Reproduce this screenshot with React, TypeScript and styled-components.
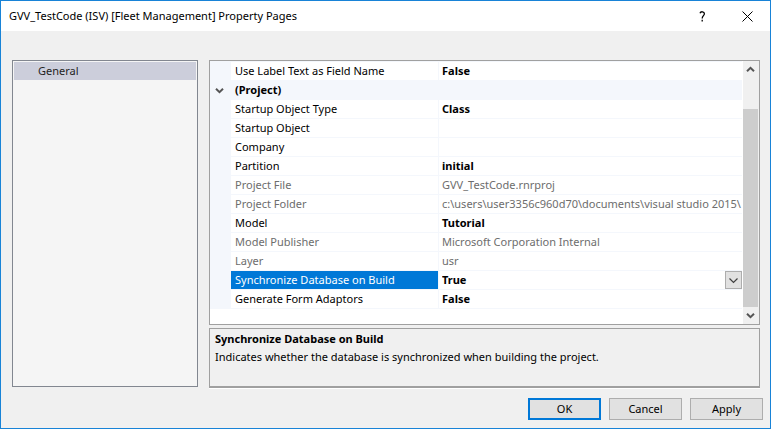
import React from "react";
import styled, { createGlobalStyle, css } from "styled-components";

const GlobalStyle = createGlobalStyle`
  *, *::before, *::after { box-sizing: border-box; }
  body {
    margin: 0;
    background: #f0f0f0;
    color: #000;
    font: 11px/18px "Noto Sans", "Open Sans", sans-serif;
  }
  button, select { font: inherit; color: inherit; }
`;

const Dialog = styled.main`
  display: flex;
  flex-direction: column;
  min-height: 100vh;
  border: 1px solid #1883d7;
  background: #f0f0f0;
`;

const TitleBar = styled.header`
  display: flex;
  align-items: center;
  height: 30px;
  padding: 0 0 0 8px;
  background: #fff;
`;

const Title = styled.h1`
  flex: 1;
  margin: 0;
  font-size: 11px;
  font-weight: 400;
  white-space: nowrap;
`;

const CaptionButton = styled.button`
  display: grid;
  place-items: center;
  width: 45px;
  height: 28px;
  padding: 0;
  border: 0;
  background: transparent;
`;

const Content = styled.div`
  display: flex;
  flex: 1;
  gap: 11px;
  padding: 29px 10px 0 11px;
`;

const PageList = styled.nav`
  flex: none;
  width: 186px;
  margin-bottom: 2px;
  padding: 1px;
  border: 1px solid #828790;
  background: #f5f5f5;
`;

const PageLink = styled.a`
  display: block;
  padding-left: 24px;
  background: #cccedb;
  color: #1e1e1e;
  text-decoration: none;
`;

const Properties = styled.section`
  display: flex;
  flex: 1;
  flex-direction: column;
  gap: 3px;
  min-width: 0;
`;

const GridBox = styled.div`
  display: flex;
  flex: 1;
  border: 1px solid #a0a0a0;
  background: #fff;
`;

const GridView = styled.div`
  flex: 1;
  min-width: 0;
  padding-bottom: 14px;
  border-top: 1px solid #f4f7fc;
`;

const PropertyTable = styled.table`
  width: 100%;
  table-layout: fixed;
  border-collapse: separate;
  border-spacing: 0;
`;

const GutterCol = styled.col`
  width: 21px;
`;

const NameCol = styled.col`
  width: 208px;
`;

const Gutter = styled.td`
  padding: 0;
  background: #f4f7fc;
`;

const Toggle = styled.button`
  display: grid;
  place-items: center;
  width: 19px;
  height: 18px;
  padding: 0;
  border: 0;
  background: transparent;
`;

const cell = css`
  height: 19px;
  padding: 0 0 0 4px;
  border-bottom: 1px solid #f4f7fc;
  background-clip: padding-box;
  overflow: hidden;
  text-align: left;
  white-space: nowrap;
`;

const CategoryCell = styled.th`
  ${cell}
  background-color: #f4f7fc;
`;

const NameCell = styled.th<{ $selected?: boolean; $readOnly?: boolean }>`
  ${cell}
  border-right: 1px solid #f4f7fc;
  font-weight: 400;
  background-color: ${(p) => (p.$selected ? "#0078d7" : "#fff")};
  color: ${(p) => (p.$selected ? "#fff" : p.$readOnly ? "#6d6d6d" : "#000")};
`;

const ValueCell = styled.td<{ $readOnly?: boolean }>`
  ${cell}
  padding-left: 3px;
  font-weight: ${(p) => (p.$readOnly ? 400 : 700)};
  color: ${(p) => (p.$readOnly ? "#6d6d6d" : "#000")};
`;

const DropDown = styled.div`
  display: grid;
  grid-template-columns: 1fr 17px;
  height: 18px;
`;

const ValueSelect = styled.select`
  grid-area: 1 / 1 / 2 / 3;
  appearance: none;
  height: 18px;
  padding: 0;
  border: 0;
  outline: 0;
  background: transparent;
  line-height: 18px;
`;

const DropArrow = styled.span`
  grid-area: 1 / 2 / 2 / 3;
  display: grid;
  place-items: center;
  border: 1px solid #adadad;
  background: #e1e1e1;
  pointer-events: none;
`;

const ScrollBar = styled.div`
  display: flex;
  flex-direction: column;
  width: 16px;
  padding-right: 1px;
  margin-left: 1px;
  background: #f0f0f0;
`;

const ScrollButton = styled.button`
  display: grid;
  place-items: center;
  flex: none;
  height: 17px;
  padding: 0;
  border: 0;
  background: transparent;
`;

const ScrollTrack = styled.div`
  display: grid;
  flex: 1;
  grid-template-rows: 31fr 198fr;
`;

const ScrollThumb = styled.div`
  grid-row: 2;
  background: #cdcdcd;
`;

const Description = styled.div`
  min-height: 60px;
  margin-bottom: 1px;
  padding: 1px 5px;
  border: 1px solid #a0a0a0;
  border-bottom-width: 2px;
  box-shadow: 0 1px 0 #fff;
`;

const DescriptionTitle = styled.h2`
  margin: 0;
  font-size: 11px;
  font-weight: 700;
`;

const DescriptionText = styled.p`
  margin: 0;
`;

const Footer = styled.footer`
  display: flex;
  justify-content: flex-end;
  gap: 8px;
  padding: 9px 7px 8px;
`;

const PushButton = styled.button<{ $primary?: boolean }>`
  width: 73px;
  height: 22px;
  padding: 0;
  border: ${(p) => (p.$primary ? "2px solid #0078d7" : "1px solid #adadad")};
  background: #e1e1e1;
  line-height: 18px;
`;

function Chevron({ up, heavy }: { up?: boolean; heavy?: boolean }) {
  return (
    <svg width="9" height="7" viewBox="0 0 9 7" fill="none" stroke={heavy ? "#555" : "#404040"} strokeWidth={heavy ? 2 : 1.2}>
      <path d={up ? "M1 5.2 4.5 1.8 8 5.2" : heavy ? "M1 1.8 4.5 5.2 8 1.8" : "M.5 1.5 4.5 5.5 8.5 1.5"} />
    </svg>
  );
}

type Row = { name: string; value?: string; readOnly?: boolean; category?: boolean; options?: string[] };

const rows: Row[] = [
  { name: "Use Label Text as Field Name", value: "False" },
  { name: "(Project)", category: true },
  { name: "Startup Object Type", value: "Class" },
  { name: "Startup Object", value: "" },
  { name: "Company", value: "" },
  { name: "Partition", value: "initial" },
  { name: "Project File", value: "GVV_TestCode.rnrproj", readOnly: true },
  { name: "Project Folder", value: "c:\\users\\user3356c960d70\\documents\\visual studio 2015\\", readOnly: true },
  { name: "Model", value: "Tutorial" },
  { name: "Model Publisher", value: "Microsoft Corporation Internal", readOnly: true },
  { name: "Layer", value: "usr", readOnly: true },
  { name: "Synchronize Database on Build", value: "True", options: ["True", "False"] },
  { name: "Generate Form Adaptors", value: "False" },
];

function PropertyRow({ row }: { row: Row }) {
  if (row.category) {
    return (
      <tr>
        <Gutter>
          <Toggle aria-label="Collapse category" aria-expanded="true">
            <Chevron heavy />
          </Toggle>
        </Gutter>
        <CategoryCell colSpan={2}>{row.name}</CategoryCell>
      </tr>
    );
  }
  return (
    <tr>
      <Gutter />
      <NameCell
        scope="row"
        id={row.options ? "selected-property" : undefined}
        $selected={!!row.options}
        $readOnly={row.readOnly}
      >
        {row.name}
      </NameCell>
      <ValueCell $readOnly={row.readOnly}>
        {row.options ? (
          <DropDown>
            <ValueSelect aria-labelledby="selected-property" defaultValue={row.value}>
              {row.options.map((o) => (
                <option key={o}>{o}</option>
              ))}
            </ValueSelect>
            <DropArrow>
              <Chevron />
            </DropArrow>
          </DropDown>
        ) : (
          row.value
        )}
      </ValueCell>
    </tr>
  );
}

export default function App() {
  return (
    <>
      <GlobalStyle />
      <Dialog>
        <TitleBar>
          <Title>GVV_TestCode (ISV) [Fleet Management] Property Pages</Title>
          <CaptionButton aria-label="Help">
            <svg width="7" height="11" viewBox="0 0 7 11" fill="none" stroke="#000" strokeWidth="1.3">
              <path d="M1 2.2C1.6 .2 5.4 .2 5.4 2.8 5.4 4.6 3.2 4.8 3.2 7.4M3.2 8.8v1.6" />
            </svg>
          </CaptionButton>
          <CaptionButton aria-label="Close">
            <svg width="11" height="11" viewBox="0 0 11 11" fill="none" stroke="#000" strokeWidth="1">
              <path d="M.5.5l10 10M10.5.5l-10 10" />
            </svg>
          </CaptionButton>
        </TitleBar>
        <Content>
          <PageList aria-label="Property pages">
            <PageLink href="#general" aria-current="page">
              General
            </PageLink>
          </PageList>
          <Properties>
            <GridBox>
              <GridView>
                <PropertyTable>
                  <colgroup>
                    <GutterCol />
                    <NameCol />
                    <col />
                  </colgroup>
                  <tbody>
                    {rows.map((row) => (
                      <PropertyRow key={row.name} row={row} />
                    ))}
                  </tbody>
                </PropertyTable>
              </GridView>
              <ScrollBar>
                <ScrollButton aria-label="Scroll up">
                  <Chevron up heavy />
                </ScrollButton>
                <ScrollTrack>
                  <ScrollThumb />
                </ScrollTrack>
                <ScrollButton aria-label="Scroll down">
                  <Chevron heavy />
                </ScrollButton>
              </ScrollBar>
            </GridBox>
            <Description>
              <DescriptionTitle>Synchronize Database on Build</DescriptionTitle>
              <DescriptionText>Indicates whether the database is synchronized when building the project.</DescriptionText>
            </Description>
          </Properties>
        </Content>
        <Footer>
          <PushButton $primary>OK</PushButton>
          <PushButton>Cancel</PushButton>
          <PushButton>Apply</PushButton>
        </Footer>
      </Dialog>
    </>
  );
}
